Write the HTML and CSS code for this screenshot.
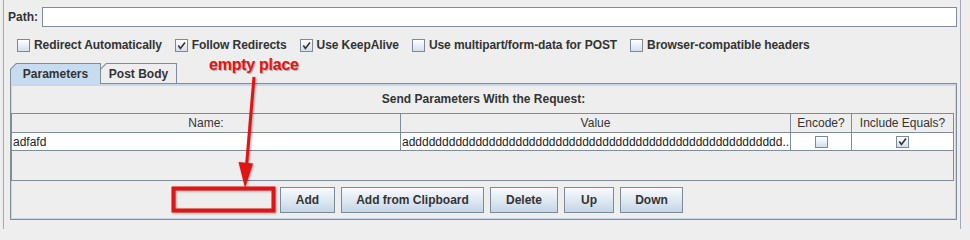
FILE: index.html
```html
<!DOCTYPE html>
<html>
<head>
<meta charset="utf-8">
<link rel="stylesheet" href="styles.css">
</head>
<body>
<div class="frame">
  <div class="path-row">
    <span class="path-label">Path:</span>
    <div class="path-field"></div>
  </div>
  <div class="checks">
    <div class="check"><span class="box"></span><span>Redirect Automatically</span></div>
    <div class="check"><span class="box"><svg width="9" height="9" viewBox="0 0 9 9"><path d="M1.3 4.6 L3.4 7.4 L8 1.6" stroke="#333" stroke-width="1.6" fill="none"/></svg></span><span>Follow Redirects</span></div>
    <div class="check"><span class="box"><svg width="9" height="9" viewBox="0 0 9 9"><path d="M1.3 4.6 L3.4 7.4 L8 1.6" stroke="#333" stroke-width="1.6" fill="none"/></svg></span><span>Use KeepAlive</span></div>
    <div class="check"><span class="box"></span><span>Use multipart/form-data for POST</span></div>
    <div class="check"><span class="box"></span><span>Browser-compatible headers</span></div>
  </div>
  <div class="tabs">
    <div class="tab tab-selected"><div class="tab-in">Parameters</div></div>
    <div class="tab tab-plain"><div class="tab-in">Post Body</div></div>
  </div>
  <div class="panel">
    <div class="panel-title">Send Parameters With the Request:</div>
    <div class="table">
      <div class="row head">
        <div class="cell c-name">Name:</div>
        <div class="cell c-value">Value</div>
        <div class="cell c-enc">Encode?</div>
        <div class="cell c-inc">Include Equals?</div>
      </div>
      <div class="row body">
        <div class="cell c-name">adfafd</div>
        <div class="cell c-value">adddddddddddddddddddddddddddddddddddddddddddddddddddddddd...</div>
        <div class="cell c-enc"><span class="box small"></span></div>
        <div class="cell c-inc"><span class="box small plain"><svg width="9" height="9" viewBox="0 0 9 9"><path d="M1.3 4.6 L3.4 7.4 L8 1.6" stroke="#333" stroke-width="1.6" fill="none"/></svg></span></div>
      </div>
    </div>
    <div class="buttons">
      <div class="placeholder"></div>
      <button class="btn b-add">Add</button>
      <button class="btn b-clip">Add from Clipboard</button>
      <button class="btn b-del">Delete</button>
      <button class="btn b-up">Up</button>
      <button class="btn b-down">Down</button>
    </div>
  </div>
</div>
<div class="note-text">empty place</div>
<svg class="note-shapes" width="970" height="229" viewBox="0 0 970 229">
  <line x1="254" y1="77" x2="246.5" y2="166" stroke="#e01414" stroke-width="3"/>
  <polygon points="238.5,162 253,163.5 245,188" fill="#e01414"/>
  <rect x="173.5" y="188.5" width="100" height="22" fill="none" stroke="#e01414" stroke-width="4"/>
</svg>
</body>
</html>
```
FILE: styles.css
```css
html, body {
  margin: 0;
  padding: 0;
}
body {
  position: relative;
  width: 970px;
  height: 229px;
  overflow: hidden;
  background: #eeeeee;
  font-family: "Liberation Sans", Arial, sans-serif;
  font-size: 12px;
  font-weight: bold;
  color: #333333;
}
.frame {
  margin-left: 3px;
  width: 958px;
  height: 229px;
  box-sizing: border-box;
  border-left: 1px solid #a3aab2;
  border-right: 1px solid #a3aab2;
  padding-top: 7px;
  display: flex;
  flex-direction: column;
}
.path-row {
  display: flex;
  align-items: center;
  height: 20px;
  padding-left: 4px;
}
.path-label {
  width: 34px;
}
.path-field {
  flex: 1;
  height: 20px;
  box-sizing: border-box;
  margin-right: 3px;
  background: #ffffff;
  border: 1px solid #7f8d9b;
}
.checks {
  display: flex;
  align-items: center;
  height: 16px;
  margin-top: 10px;
  padding-left: 13px;
  gap: 13px;
  letter-spacing: -0.08px;
}
.check {
  display: flex;
  align-items: center;
  gap: 4px;
}
.box {
  width: 13px;
  height: 13px;
  box-sizing: border-box;
  border: 1px solid #7a8a99;
  background: linear-gradient(#ffffff, #d3dfeb);
  display: flex;
  align-items: center;
  justify-content: center;
}
.box.small {
  width: 13px;
  height: 12px;
}
.tabs {
  display: flex;
  align-items: flex-end;
  height: 20px;
  margin-top: 10px;
  padding-left: 6px;
  position: relative;
  z-index: 1;
}
.tab {
  background: #7f8d9b;
  padding: 1px 1px 0 1px;
  clip-path: polygon(6px 0, 100% 0, 100% 100%, 0 100%, 0 6px);
}
.tab-in {
  display: flex;
  align-items: center;
  justify-content: center;
  clip-path: polygon(5.5px 0, 100% 0, 100% 100%, 0 100%, 0 5.5px);
}
.tab-selected {
  width: 91px;
  box-sizing: border-box;
  margin-bottom: -1px;
}
.tab-selected .tab-in {
  height: 20px;
  background: #c8dcf0;
}
.tab-plain {
  width: 77px;
  box-sizing: border-box;
  margin-left: -1px;
}
.tab-plain .tab-in {
  height: 19px;
  background: #eeeeee;
}
.panel {
  margin-left: 6px;
  width: 947px;
  height: 137px;
  box-sizing: border-box;
  border: 1px solid #7f8d9b;
  box-shadow: inset 0 0 0 1px #c8d8ea, inset 0 2px 0 0 #c8d8ea;
  display: flex;
  flex-direction: column;
}
.panel-title {
  height: 29px;
  display: flex;
  align-items: center;
  justify-content: center;
}
.table {
  margin-right: 2px;
  height: 68px;
  box-sizing: border-box;
  border: 1px solid #7f8d9b;
  background: #eeeeee;
  font-weight: normal;
}
.row {
  display: grid;
  grid-template-columns: 389px 390px 61px 1fr;
}
.row.head {
  height: 19px;
  border-bottom: 1px solid #7f8d9b;
  box-sizing: border-box;
}
.row.body {
  height: 18px;
  background: #ffffff;
  border-bottom: 1px solid #7f8d9b;
  box-sizing: border-box;
}
.cell {
  border-right: 1px solid #7f8d9b;
  overflow: hidden;
  white-space: nowrap;
  display: flex;
  align-items: center;
}
.cell.c-inc {
  border-right: none;
}
.head .cell {
  justify-content: center;
  color: #333333;
}
.body .cell {
  padding-left: 1px;
  color: #222222;
}
.body .c-enc, .body .c-inc {
  justify-content: center;
  padding-left: 0;
}
.buttons {
  display: flex;
  align-items: center;
  margin-top: 6px;
  padding-left: 163px;
  gap: 6px;
}
.placeholder {
  width: 100px;
  height: 26px;
}
.btn {
  height: 26px;
  box-sizing: border-box;
  border: 1px solid #7a8a99;
  border-radius: 0;
  background: linear-gradient(#f8fafc, #dde7f1 55%, #c3d5e7);
  font-family: "Liberation Sans", Arial, sans-serif;
  font-size: 12px;
  font-weight: bold;
  color: #333333;
  padding: 0;
}
.b-add { width: 55px; }
.b-clip { width: 143px; }
.b-del { width: 68px; }
.b-up { width: 50px; }
.b-down { width: 63px; }
.note-text {
  position: absolute;
  left: 209px;
  top: 57px;
  font-size: 16px;
  line-height: 16px;
  letter-spacing: -0.25px;
  font-weight: bold;
  color: #e01414;
  text-shadow: 1px 1px 1px rgba(0, 0, 0, 0.3);
}
.note-shapes {
  position: absolute;
  left: 0;
  top: 0;
  filter: drop-shadow(1px 1px 1px rgba(0, 0, 0, 0.35));
}
```
